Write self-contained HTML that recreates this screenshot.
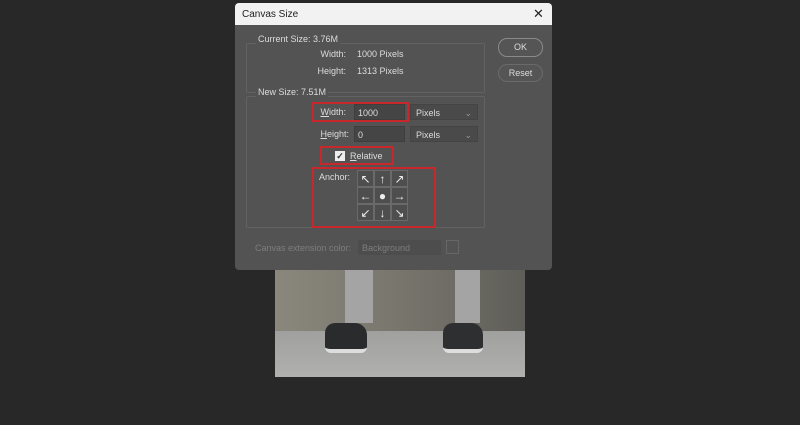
<!DOCTYPE html>
<html><head><style>
*{margin:0;padding:0;box-sizing:border-box}
body{width:800px;height:425px;background:#282828;position:relative;overflow:hidden;font-family:"Liberation Sans",sans-serif;font-size:9px;color:#dcdcdc}
.a{position:absolute}
.dlg{left:235px;top:3px;width:317px;height:267px;background:#535353;border-radius:4px;overflow:hidden}
.tb{left:0;top:0;width:317px;height:22px;background:#f2f2f2;color:#222;font-size:10px;padding:6px 7px}
.grp{border:1px solid #626262;border-radius:2px}
.lbl{text-align:right;width:60px}
.in{background:#454545;border:1px solid #3e3e3e}
.sel{background:#4a4a4a;border:1px solid #444;padding:3px 5px}
.btn{border:1px solid #8a8a8a;border-radius:9px;text-align:center;background:#555}
.red{border:2px solid #c8282b}
.cell{width:17px;height:17px;background:#4e4e4e;border:1px solid #6a6a6a;display:flex;align-items:center;justify-content:center;color:#eee;font-size:12px}
</style></head><body>
<div class="a" style="left:275px;top:268px;width:250px;height:109px;background:#7d7a72;overflow:hidden">
 <div class="a" style="left:0;top:0;width:250px;height:63px;background:linear-gradient(90deg,#8a877d,#7c7a70 40%,#6e6c64 70%,#5e5d58)"></div>
 <div class="a" style="left:0;top:63px;width:250px;height:46px;background:linear-gradient(180deg,#a0a09e,#b0b0ae)"></div>
 <div class="a" style="left:70px;top:0;width:28px;height:55px;background:#a4a4a4"></div>
 <div class="a" style="left:180px;top:0;width:25px;height:55px;background:#a4a4a4"></div>
 <div class="a" style="left:50px;top:55px;width:42px;height:30px;background:#2a2b2c;border-radius:10px 12px 6px 6px;border-bottom:4px solid #ddd"></div>
 <div class="a" style="left:168px;top:55px;width:40px;height:30px;background:#2e2f30;border-radius:10px 12px 6px 6px;border-bottom:4px solid #ddd"></div>
</div>
<div class="a dlg">
 <div class="a tb">Canvas Size<span class="a" style="left:298px;top:3px;font-size:13px">✕</span></div>
 <div class="a grp" style="left:11px;top:40px;width:239px;height:50px"></div>
 <div class="a" style="left:21px;top:31px;background:#535353;padding:0 2px">Current Size: 3.76M</div>
 <div class="a lbl" style="left:51px;top:46px">Width:</div><div class="a" style="left:122px;top:46px">1000 Pixels</div>
 <div class="a lbl" style="left:51px;top:63px">Height:</div><div class="a" style="left:122px;top:63px">1313 Pixels</div>
 <div class="a btn" style="left:263px;top:35px;width:45px;height:19px;line-height:17px">OK</div>
 <div class="a btn" style="left:263px;top:61px;width:45px;height:18px;line-height:16px;border-color:#6a6a6a">Reset</div>
 <div class="a grp" style="left:11px;top:93px;width:239px;height:132px"></div>
 <div class="a" style="left:21px;top:84px;background:#535353;padding:0 2px">New Size: 7.51M</div>
 <div class="a red" style="left:77px;top:99px;width:97px;height:20px"></div>
 <div class="a lbl" style="left:51px;top:104px"><u>W</u>idth:</div>
 <div class="a in" style="left:119px;top:101px;width:51px;height:16px;padding:3px 3px">1000</div>
 <div class="a sel" style="left:175px;top:101px;width:68px;height:16px">Pixels<span style="float:right;color:#999">⌄</span></div>
 <div class="a lbl" style="left:54px;top:126px"><u>H</u>eight:</div>
 <div class="a in" style="left:119px;top:123px;width:51px;height:16px;padding:3px 3px">0</div>
 <div class="a sel" style="left:175px;top:123px;width:68px;height:16px">Pixels<span style="float:right;color:#999">⌄</span></div>
 <div class="a red" style="left:85px;top:143px;width:74px;height:19px"></div>
 <div class="a" style="left:100px;top:148px;width:10px;height:10px;background:#eee;color:#333;font-size:9px;line-height:10px;text-align:center;font-weight:bold">✓</div>
 <div class="a" style="left:115px;top:148px"><u>R</u>elative</div>
 <div class="a red" style="left:77px;top:164px;width:124px;height:61px"></div>
 <div class="a" style="left:84px;top:169px">Anchor:</div>
 <div class="a" style="left:122px;top:167px;display:grid;grid-template-columns:repeat(3,17px);gap:0">
  <div class="cell">↖</div><div class="cell">↑</div><div class="cell">↗</div>
  <div class="cell">←</div><div class="cell">●</div><div class="cell">→</div>
  <div class="cell">↙</div><div class="cell">↓</div><div class="cell">↘</div>
 </div>
 <div class="a" style="left:20px;top:240px;color:#7d7d7d">Canvas extension color:</div>
 <div class="a" style="left:123px;top:237px;width:83px;height:15px;background:#4d4d4d;color:#7d7d7d;padding:3px 4px">Background</div>
 <div class="a" style="left:211px;top:237px;width:13px;height:14px;border:1px solid #666"></div>
</div>
</body></html>
